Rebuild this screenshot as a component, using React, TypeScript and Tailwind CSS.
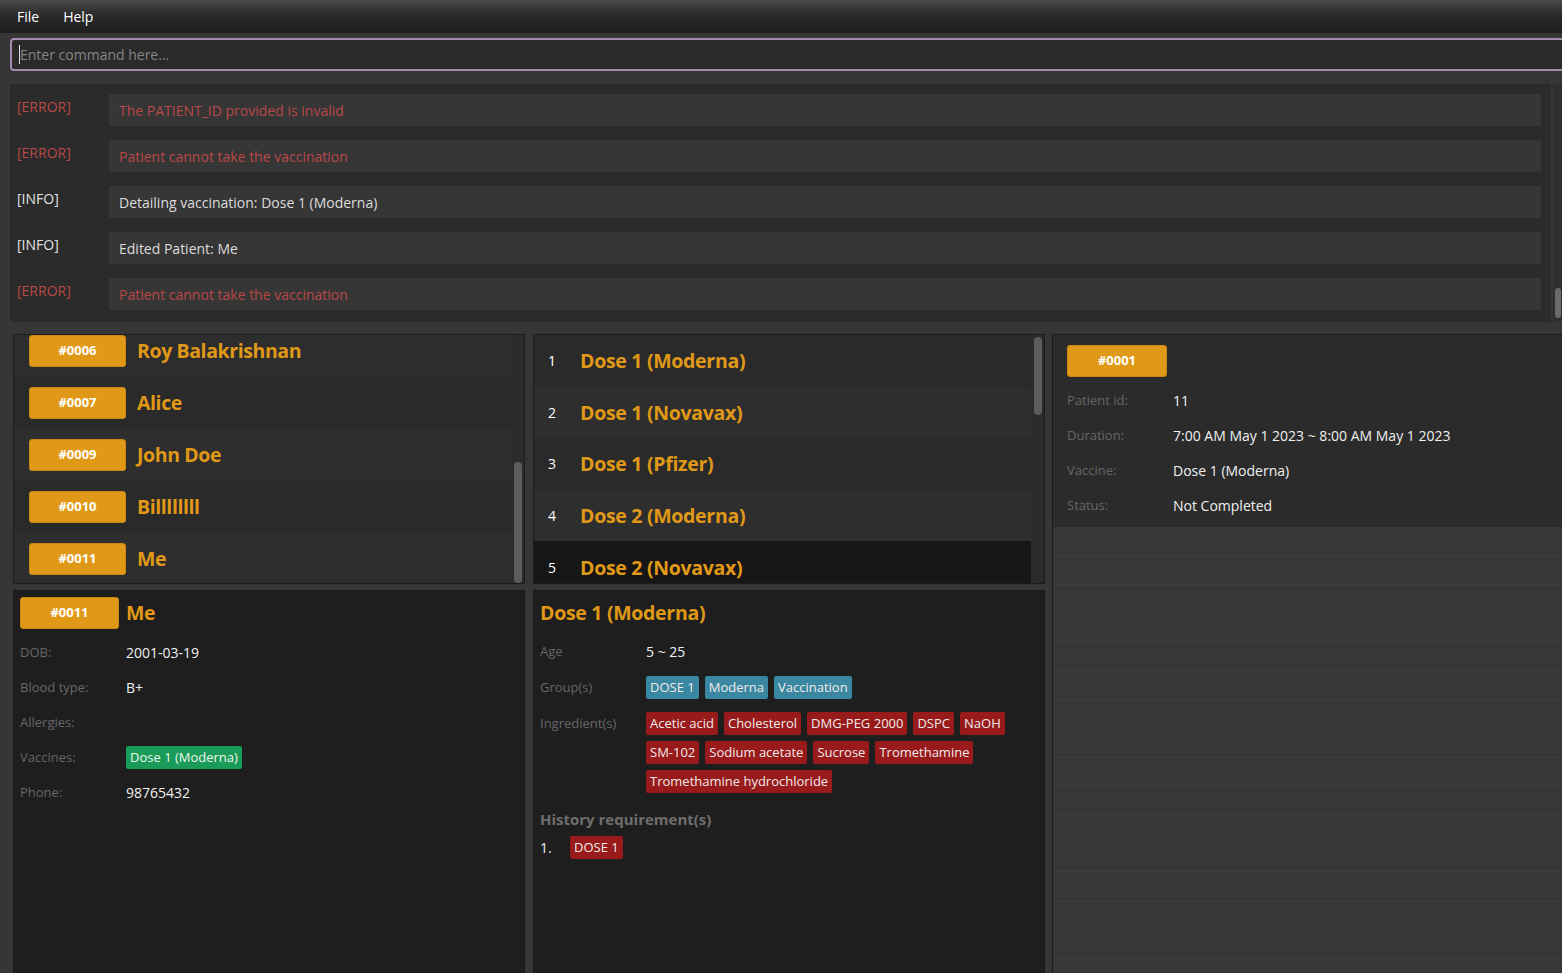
import React from "react";

const logs = [
  { level: "ERROR", text: "The PATIENT_ID provided is invalid" },
  { level: "ERROR", text: "Patient cannot take the vaccination" },
  { level: "INFO", text: "Detailing vaccination: Dose 1 (Moderna)" },
  { level: "INFO", text: "Edited Patient: Me" },
  { level: "ERROR", text: "Patient cannot take the vaccination" },
];

const patients = [
  { id: "#0006", name: "Roy Balakrishnan", bg: "bg-[#2d2d2d]" },
  { id: "#0007", name: "Alice", bg: "bg-[#2a2a2a]" },
  { id: "#0009", name: "John Doe", bg: "bg-[#2e2e2e]" },
  { id: "#0010", name: "Billllllll", bg: "bg-[#2a2a2a]" },
  { id: "#0011", name: "Me", bg: "bg-[#2e2e2e]" },
];

const vaccines = [
  { name: "Dose 1 (Moderna)", bg: "bg-[#2a2a2a]" },
  { name: "Dose 1 (Novavax)", bg: "bg-[#2e2e2e]" },
  { name: "Dose 1 (Pfizer)", bg: "bg-[#2a2a2a]" },
  { name: "Dose 2 (Moderna)", bg: "bg-[#2e2e2e]" },
  { name: "Dose 2 (Novavax)", bg: "bg-[#161616]" },
];

const groups = ["DOSE 1", "Moderna", "Vaccination"];
const ingredients = [
  "Acetic acid",
  "Cholesterol",
  "DMG-PEG 2000",
  "DSPC",
  "NaOH",
  "SM-102",
  "Sodium acetate",
  "Sucrose",
  "Tromethamine",
  "Tromethamine hydrochloride",
];

// empty cells under the appointment card
const emptyRows = [30, 28, 57, 29, 29, 58, 28, 29, 57, 30, 57, 40];

const Badge = ({ id, width }: { id: string; width: string }) => (
  <div
    className={`${width} h-[32px] shrink-0 rounded-[3px] bg-[#e09916] border border-[#c98912] flex items-center justify-center text-white font-bold text-[13px]`}
  >
    {id}
  </div>
);

const Field = ({ label, children }: { label: string; children?: React.ReactNode }) => (
  <div className="h-[35px] flex items-center">
    <div className="w-[106px] shrink-0 text-[13px] text-[#666666]">{label}</div>
    <div className="text-[14px] text-[#f0f0f0]">{children}</div>
  </div>
);

const Chip = ({ text, color }: { text: string; color: string }) => (
  <span className={`${color} h-[23px] px-[4px] rounded-[2px] text-[13px] leading-[23px] text-[#f2eaea] whitespace-nowrap`}>
    {text}
  </span>
);

export default function App() {
  return (
    <div className="w-[1562px] h-[973px] overflow-hidden bg-[#363636] flex flex-col font-['Open_Sans','Noto_Sans',sans-serif] text-[14px]">
      {/* menu bar */}
      <div className="h-[33px] shrink-0 flex items-center gap-[24px] pl-[17px] bg-linear-to-b from-[#4a4a4a] via-[#282828] to-[#1f1f1f] text-white text-[14px]">
        <span>File</span>
        <span>Help</span>
      </div>

      {/* command box */}
      <div className="shrink-0 pl-[10px] pt-[5px] pb-[13px]">
        <div className="w-[1570px] h-[33px] rounded-[4px] border-2 border-[#a48bb0] bg-[#2a2a2a] flex items-center pl-[7px]">
          <span className="w-px h-[19px] bg-[#e0e0e0]" />
          <span className="text-[#858585]">Enter command here...</span>
        </div>
      </div>

      {/* result log */}
      <div className="h-[238px] shrink-0 flex pl-[10px]">
        <div className="w-[1541px] bg-[#2b2b2b] pt-[10px] pl-[7px] pr-[10px] flex flex-col gap-[14px]">
          {logs.map((log, i) => (
            <div key={i} className="flex items-start">
              <div className={`w-[92px] pt-[2px] ${log.level === "ERROR" ? "text-[#b94848]" : "text-[#e2e2e2]"}`}>
                [{log.level}]
              </div>
              <div
                className={`flex-1 h-[32px] bg-[#363636] flex items-center pl-[10px] ${log.level === "ERROR" ? "text-[#b94848]" : "text-[#dcdcdc]"}`}
              >
                {log.text}
              </div>
            </div>
          ))}
        </div>
        <div className="w-[2px]" />
        <div className="flex-1 bg-[#2e2e2e] flex flex-col items-center pt-[204px]">
          <div className="w-[6px] h-[30px] rounded-[3px] bg-[#6a6a6a]" />
        </div>
      </div>

      {/* panels */}
      <div className="flex-1 min-h-0 flex pl-[13px] pt-[12px] gap-[8px]">
        {/* left column */}
        <div className="w-[512px] shrink-0 flex flex-col gap-[6px]">
          <div className="h-[250px] shrink-0 border border-[#1c1c1c] bg-[#2b2b2b] flex overflow-hidden">
            <div className="flex-1 overflow-hidden">
              <div className="-mt-[10px]">
                {patients.map((p) => (
                  <div key={p.id} className={`${p.bg} h-[52px] flex items-center pl-[15px] gap-[11px]`}>
                    <Badge id={p.id} width="w-[97px]" />
                    <span className="text-[19.5px] tracking-[-0.4px] font-bold text-[#e09916]">{p.name}</span>
                  </div>
                ))}
              </div>
            </div>
            <div className="w-[12px] shrink-0 bg-[#2b2b2b] flex flex-col items-center pt-[127px]">
              <div className="w-[8px] h-[121px] rounded-[4px] bg-[#5c5c5c]" />
            </div>
          </div>

          <div className="flex-1 min-h-0 border border-[#1a1a1a] bg-[#1e1e1e] pt-[6px] pl-[6px]">
            <div className="flex items-center gap-[7px]">
              <Badge id="#0011" width="w-[99px]" />
              <span className="text-[19.5px] tracking-[-0.4px] font-bold text-[#e09916]">Me</span>
            </div>
            <div className="mt-[6px] flex flex-col">
              <Field label="DOB:">2001-03-19</Field>
              <Field label="Blood type:">B+</Field>
              <Field label="Allergies:" />
              <Field label="Vaccines:">
                <span className="inline-block h-[23px] px-[4px] rounded-[2px] bg-[#1a9b57] text-[13px] leading-[23px] text-[#eef7f1]">
                  Dose 1 (Moderna)
                </span>
              </Field>
              <Field label="Phone:">98765432</Field>
            </div>
          </div>
        </div>

        {/* middle column */}
        <div className="w-[512px] shrink-0 flex flex-col gap-[6px]">
          <div className="h-[250px] shrink-0 border border-[#1c1c1c] bg-[#2b2b2b] flex overflow-hidden">
            <div className="flex-1 overflow-hidden">
              {vaccines.map((v, i) => (
                <div key={v.name} className={`${v.bg} h-[51.6px] flex items-center pl-[14px]`}>
                  <span className="w-[32px] text-[14px] text-white">{i + 1}</span>
                  <span className="text-[19.5px] tracking-[-0.3px] font-bold text-[#e09916]">{v.name}</span>
                </div>
              ))}
            </div>
            <div className="w-[13px] shrink-0 bg-[#2b2b2b] flex flex-col items-center pt-[2px]">
              <div className="w-[8px] h-[78px] rounded-[4px] bg-[#5c5c5c]" />
            </div>
          </div>

          <div className="flex-1 min-h-0 border border-[#1a1a1a] bg-[#1e1e1e] pt-[8px] pl-[6px] pr-[10px]">
            <div className="h-[28px] flex items-center text-[19.5px] tracking-[-0.3px] font-bold text-[#e09916]">
              Dose 1 (Moderna)
            </div>
            <div className="mt-[13px] flex flex-col">
              <div className="flex items-center h-[23px]">
                <div className="w-[106px] shrink-0 text-[13px] text-[#666666]">Age</div>
                <div className="text-[#f0f0f0]">5 ~ 25</div>
              </div>
              <div className="mt-[13px] flex items-center">
                <div className="w-[106px] shrink-0 text-[13px] text-[#666666]">Group(s)</div>
                <div className="flex gap-[6px]">
                  {groups.map((g) => (
                    <Chip key={g} text={g} color="bg-[#3a87a1]" />
                  ))}
                </div>
              </div>
              <div className="mt-[13px] flex items-start">
                <div className="w-[106px] h-[23px] shrink-0 flex items-center text-[13px] text-[#666666]">Ingredient(s)</div>
                <div className="w-[370px] flex flex-wrap gap-x-[6px] gap-y-[6px]">
                  {ingredients.map((g) => (
                    <Chip key={g} text={g} color="bg-[#981a1a]" />
                  ))}
                </div>
              </div>
              <div className="mt-[16px] h-[20px] flex items-center text-[15px] font-bold text-[#6e6e6e]">
                History requirement(s)
              </div>
              <div className="mt-[7px] flex items-center">
                <span className="w-[30px] text-[#f0f0f0]">1.</span>
                <Chip text="DOSE 1" color="bg-[#981a1a]" />
              </div>
            </div>
          </div>
        </div>

        {/* right column */}
        <div className="flex-1 min-w-0 ml-[-1px] border-l border-t border-[#1c1c1c] bg-[#373737] flex flex-col overflow-hidden">
          <div className="h-[192px] shrink-0 bg-[#2b2b2b] pt-[10px] pl-[14px]">
            <Badge id="#0001" width="w-[100px]" />
            <div className="mt-[6px] flex flex-col">
              <Field label="Patient id:">11</Field>
              <Field label="Duration:">7:00 AM May 1 2023 ~ 8:00 AM May 1 2023</Field>
              <Field label="Vaccine:">Dose 1 (Moderna)</Field>
              <Field label="Status:">Not Completed</Field>
            </div>
          </div>
          {emptyRows.map((h, i) => (
            <div key={i} className="shrink-0 border-b border-[#3e3e3e]" style={{ height: h }} />
          ))}
        </div>
      </div>
    </div>
  );
}
